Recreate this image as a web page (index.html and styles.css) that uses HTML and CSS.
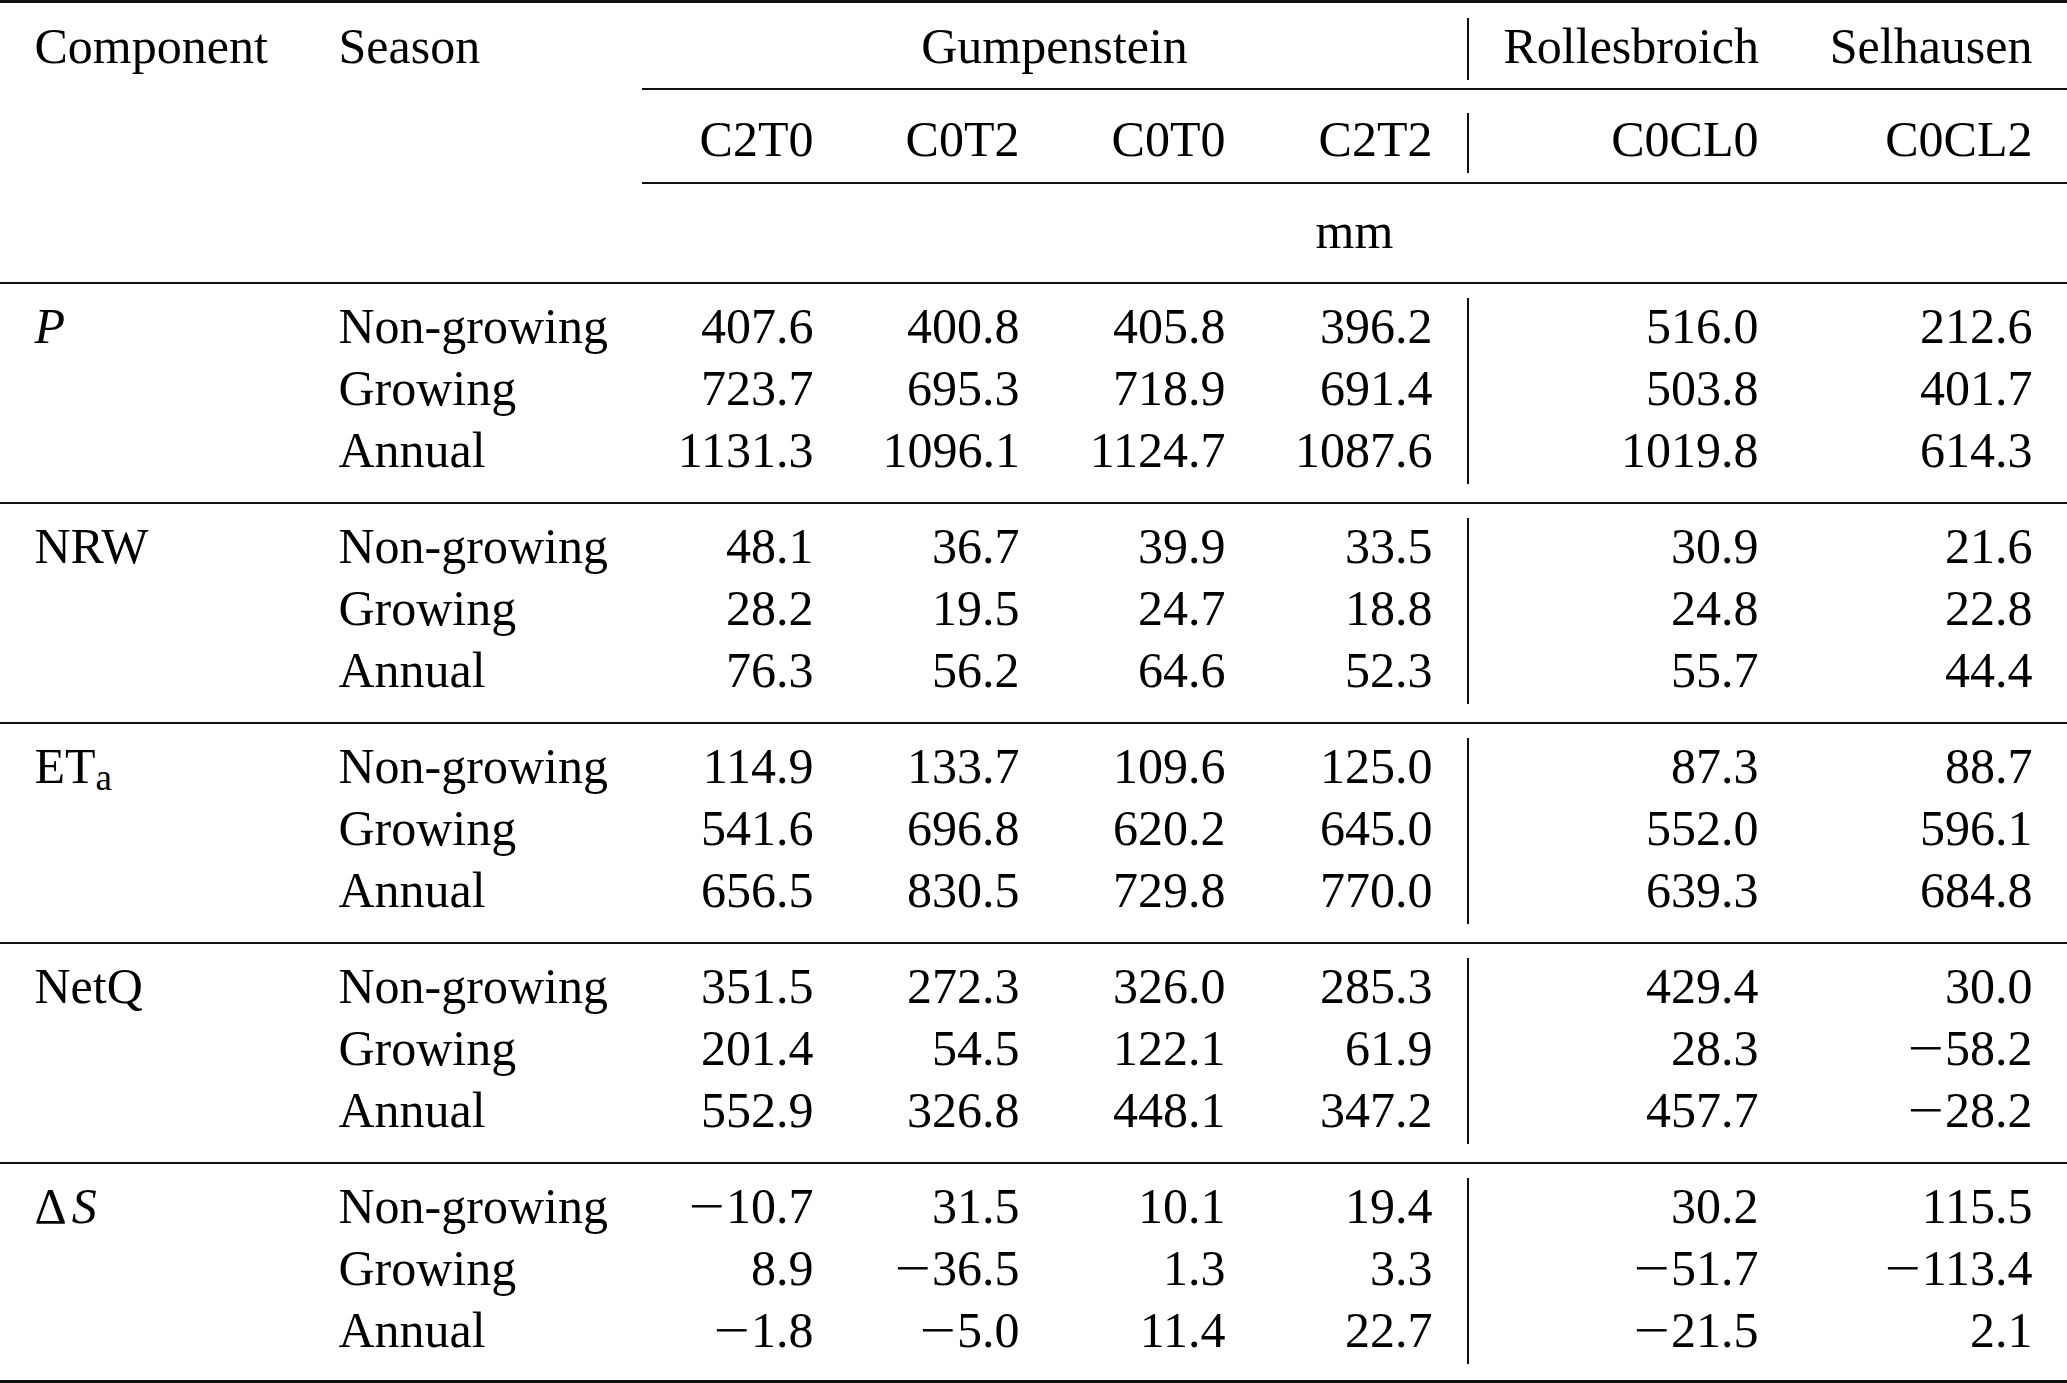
FILE: index.html
```html
<!DOCTYPE html>
<html lang="en">
<head>
<meta charset="utf-8">
<title>Water balance components</title>
<link rel="stylesheet" href="styles.css">
</head>
<body>
<div class="table">
  <div class="head">
    <div class="row h1">
      <div class="cell">Component</div>
      <div class="cell">Season</div>
      <div class="cell site-g">Gumpenstein</div>
      <div class="cell r sep">Rollesbroich</div>
      <div class="cell r">Selhausen</div>
    </div>
    <div class="rule-row rule-a"><div class="cmid"></div></div>
    <div class="row h2">
      <div class="cell"></div>
      <div class="cell"></div>
      <div class="cell r">C2T0</div>
      <div class="cell r">C0T2</div>
      <div class="cell r">C0T0</div>
      <div class="cell r">C2T2</div>
      <div class="cell r sep">C0CL0</div>
      <div class="cell r">C0CL2</div>
    </div>
    <div class="rule-row rule-b"><div class="cmid"></div></div>
    <div class="row units">
      <div class="cell"></div>
      <div class="cell"></div>
      <div class="cell unit">mm</div>
    </div>
  </div>

  <div class="group">
    <div class="row">
      <div class="cell"><i>P</i></div><div class="cell">Non-growing</div>
      <div class="cell r">407.6</div><div class="cell r">400.8</div><div class="cell r">405.8</div><div class="cell r">396.2</div>
      <div class="cell r sep">516.0</div><div class="cell r">212.6</div>
    </div>
    <div class="row">
      <div class="cell"></div><div class="cell">Growing</div>
      <div class="cell r">723.7</div><div class="cell r">695.3</div><div class="cell r">718.9</div><div class="cell r">691.4</div>
      <div class="cell r sep">503.8</div><div class="cell r">401.7</div>
    </div>
    <div class="row">
      <div class="cell"></div><div class="cell">Annual</div>
      <div class="cell r">1131.3</div><div class="cell r">1096.1</div><div class="cell r">1124.7</div><div class="cell r">1087.6</div>
      <div class="cell r sep">1019.8</div><div class="cell r">614.3</div>
    </div>
  </div>

  <div class="group">
    <div class="row">
      <div class="cell">NRW</div><div class="cell">Non-growing</div>
      <div class="cell r">48.1</div><div class="cell r">36.7</div><div class="cell r">39.9</div><div class="cell r">33.5</div>
      <div class="cell r sep">30.9</div><div class="cell r">21.6</div>
    </div>
    <div class="row">
      <div class="cell"></div><div class="cell">Growing</div>
      <div class="cell r">28.2</div><div class="cell r">19.5</div><div class="cell r">24.7</div><div class="cell r">18.8</div>
      <div class="cell r sep">24.8</div><div class="cell r">22.8</div>
    </div>
    <div class="row">
      <div class="cell"></div><div class="cell">Annual</div>
      <div class="cell r">76.3</div><div class="cell r">56.2</div><div class="cell r">64.6</div><div class="cell r">52.3</div>
      <div class="cell r sep">55.7</div><div class="cell r">44.4</div>
    </div>
  </div>

  <div class="group">
    <div class="row">
      <div class="cell">ET<sub>a</sub></div><div class="cell">Non-growing</div>
      <div class="cell r">114.9</div><div class="cell r">133.7</div><div class="cell r">109.6</div><div class="cell r">125.0</div>
      <div class="cell r sep">87.3</div><div class="cell r">88.7</div>
    </div>
    <div class="row">
      <div class="cell"></div><div class="cell">Growing</div>
      <div class="cell r">541.6</div><div class="cell r">696.8</div><div class="cell r">620.2</div><div class="cell r">645.0</div>
      <div class="cell r sep">552.0</div><div class="cell r">596.1</div>
    </div>
    <div class="row">
      <div class="cell"></div><div class="cell">Annual</div>
      <div class="cell r">656.5</div><div class="cell r">830.5</div><div class="cell r">729.8</div><div class="cell r">770.0</div>
      <div class="cell r sep">639.3</div><div class="cell r">684.8</div>
    </div>
  </div>

  <div class="group">
    <div class="row">
      <div class="cell">NetQ</div><div class="cell">Non-growing</div>
      <div class="cell r">351.5</div><div class="cell r">272.3</div><div class="cell r">326.0</div><div class="cell r">285.3</div>
      <div class="cell r sep">429.4</div><div class="cell r">30.0</div>
    </div>
    <div class="row">
      <div class="cell"></div><div class="cell">Growing</div>
      <div class="cell r">201.4</div><div class="cell r">54.5</div><div class="cell r">122.1</div><div class="cell r">61.9</div>
      <div class="cell r sep">28.3</div><div class="cell r"><span class="m">&minus;</span>58.2</div>
    </div>
    <div class="row">
      <div class="cell"></div><div class="cell">Annual</div>
      <div class="cell r">552.9</div><div class="cell r">326.8</div><div class="cell r">448.1</div><div class="cell r">347.2</div>
      <div class="cell r sep">457.7</div><div class="cell r"><span class="m">&minus;</span>28.2</div>
    </div>
  </div>

  <div class="group last">
    <div class="row">
      <div class="cell">&Delta;<i class="s">S</i></div><div class="cell">Non-growing</div>
      <div class="cell r"><span class="m">&minus;</span>10.7</div><div class="cell r">31.5</div><div class="cell r">10.1</div><div class="cell r">19.4</div>
      <div class="cell r sep">30.2</div><div class="cell r">115.5</div>
    </div>
    <div class="row">
      <div class="cell"></div><div class="cell">Growing</div>
      <div class="cell r">8.9</div><div class="cell r"><span class="m">&minus;</span>36.5</div><div class="cell r">1.3</div><div class="cell r">3.3</div>
      <div class="cell r sep"><span class="m">&minus;</span>51.7</div><div class="cell r"><span class="m">&minus;</span>113.4</div>
    </div>
    <div class="row">
      <div class="cell"></div><div class="cell">Annual</div>
      <div class="cell r"><span class="m">&minus;</span>1.8</div><div class="cell r"><span class="m">&minus;</span>5.0</div><div class="cell r">11.4</div><div class="cell r">22.7</div>
      <div class="cell r sep"><span class="m">&minus;</span>21.5</div><div class="cell r">2.1</div>
    </div>
  </div>
</div>
</body>
</html>
```
FILE: styles.css
```css
html, body {
  margin: 0;
  padding: 0;
  background: #ffffff;
}

body {
  font-family: "Liberation Serif", "Times New Roman", serif;
  font-size: 50px;
  color: #000000;
}

.table {
  width: 2067px;
  border-top: 3px solid #111111;
  border-bottom: 3px solid #111111;
}

.row,
.rule-row {
  display: grid;
  grid-template-columns: 304px 338px 206px 206px 206px 207px 326px 274px;
}

.row {
  grid-auto-rows: 62px;
}

.cell {
  padding: 0 34.5px;
  line-height: 56px;
  white-space: nowrap;
}

.r {
  text-align: right;
}

.sep {
  border-left: 2px solid #111111;
}

/* header */
.head {
  padding-top: 15px;
  padding-bottom: 17px;
  border-bottom: 2px solid #111111;
}

.site-g {
  grid-column: 3 / 7;
  text-align: center;
}

.rule-a {
  margin: 8px 0 23px;
}

.rule-b {
  margin: 9px 0 19px;
}

.cmid {
  grid-column: 3 / -1;
  height: 2px;
  background: #111111;
}

.h2 {
  grid-auto-rows: 60px;
}

.h2 .cell {
  line-height: 52px;
}

.unit {
  grid-column: 3 / -1;
  text-align: center;
}

/* body groups */
.group {
  padding: 14px 0 18px;
  border-bottom: 2px solid #111111;
}

.group.last {
  padding-bottom: 16px;
  border-bottom: none;
}

sub {
  font-size: 0.74em;
  vertical-align: -0.2em;
  line-height: 0;
}

.s {
  margin-left: 5px;
}

/* TeX-style wide minus sign */
.m {
  display: inline-block;
  width: 0.78em;
  text-align: center;
  transform: scaleX(1.28);
}
```
